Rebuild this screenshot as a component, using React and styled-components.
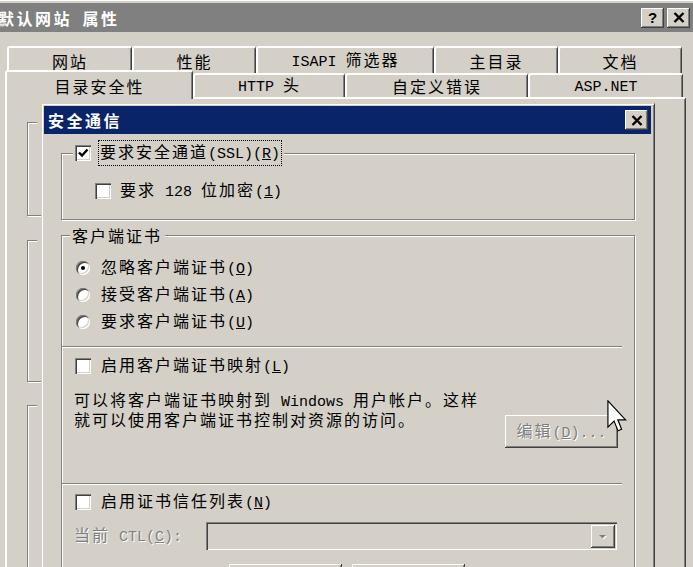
import React from "react";
import styled, { createGlobalStyle, css } from "styled-components";

const face = "#d4d0c8";

const GlobalStyle = createGlobalStyle`
  html, body { margin: 0; padding: 0; background: ${face}; overflow: hidden; }
  body {
    font-family: "Noto Sans CJK SC", "Noto Sans", sans-serif;
    font-size: 16px;
    letter-spacing: 2px;
    color: #000;
  }
  * { box-sizing: border-box; }
`;

const raised = css`
  box-shadow: inset -1px -1px 0 #404040, inset 1px 1px 0 #fff,
    inset -2px -2px 0 #808080, inset 2px 2px 0 ${face};
`;

const sunken = css`
  box-shadow: inset 1px 1px 0 #808080, inset 2px 2px 0 #404040,
    inset -1px -1px 0 #fff, inset -2px -2px 0 ${face};
`;

const Window = styled.div`
  position: relative;
  width: 693px;
  height: 567px;
  overflow: hidden;
  background: ${face};
  border-top: 1px solid #fff;
  padding-top: 2px;
`;

const TitleBar = styled.div`
  display: flex;
  align-items: center;
  gap: 3px;
  height: ${p => p.$h}px;
  padding: 0 3px 0 4px;
  background: ${p => (p.$active ? "#0a246a" : "#808080")};
`;

const TitleText = styled.div`
  flex: 1;
  margin-left: ${p => p.$indent || 0}px;
  color: #fff;
  font-weight: 700;
  letter-spacing: 2.5px;
  line-height: 20px;
  white-space: nowrap;
`;

const CapButton = styled.div`
  flex: none;
  width: 23px;
  height: 20px;
  display: grid;
  place-items: center;
  background: ${face};
  ${raised};
  font-family: "Liberation Sans", sans-serif;
  font-weight: 700;
  font-size: 15px;
  letter-spacing: 0;
  line-height: 1;
`;

const TabStrip = styled.div`
  margin-top: 14px;
  padding-left: 5px;
`;

const TabRow = styled.div`
  display: flex;
  align-items: flex-end;
  height: 27px;
  padding-left: ${p => p.$indent || 0}px;
  ${p =>
    p.$front &&
    css`
      margin-top: -3px;
      position: relative;
      z-index: 2;
    `}
`;

const Tab = styled.div`
  flex: none;
  width: ${p => p.$w}px;
  height: ${p => (p.$selected ? 29 : p.$front ? 24 : 27)}px;
  margin-bottom: ${p => (p.$selected ? -2 : 0)}px;
  display: flex;
  align-items: center;
  justify-content: center;
  background: ${face};
  border-top: 2px solid #fff;
  border-left: 2px solid #fff;
  border-right: 1px solid #404040;
  box-shadow: inset -1px 0 0 #808080;
  border-radius: 3px 3px 0 0;
  line-height: 20px;
  white-space: nowrap;
`;

const Panel = styled.div`
  width: 681px;
  height: 480px;
  background: ${face};
  border-top: 2px solid #fff;
  border-left: 2px solid #fff;
  border-right: 1px solid #404040;
  box-shadow: inset -1px 0 0 #808080;
  padding: 23px 0 0 20px;
`;

const Group = styled.div`
  border: 1px solid #808080;
  box-shadow: inset 1px 1px 0 #fff, 1px 1px 0 #fff;
  width: ${p => (p.$w ? `${p.$w}px` : "auto")};
  height: ${p => (p.$h ? `${p.$h}px` : "auto")};
  margin-top: ${p => p.$mt || 0}px;
  padding-bottom: ${p => p.$pb || 0}px;
`;

const Legend = styled.div`
  display: flex;
  align-items: center;
  gap: 8px;
  width: ${p => (p.$w ? `${p.$w}px` : "fit-content")};
  height: 20px;
  margin: -11px 0 0 ${p => p.$left}px;
  padding: 0 3px 0 2px;
  background: ${face};
  line-height: 20px;
  white-space: nowrap;
`;

const Dialog = styled.div`
  position: absolute;
  left: 41px;
  top: 102px;
  z-index: 5;
  width: 614px;
  background: ${face};
  border: 1px solid;
  border-color: ${face} #404040 #404040 ${face};
  box-shadow: inset 1px 1px 0 #fff, inset -1px -1px 0 #808080;
  padding: 2px 3px 2px 2px;
`;

const DialogBody = styled.div`
  padding: 19px 16px 0 17px;
`;

const Row = styled.div`
  display: flex;
  align-items: center;
  gap: ${p => p.$gap ?? 10}px;
  height: ${p => p.$h || 20}px;
  margin-top: ${p => p.$mt || 0}px;
  padding-left: ${p => p.$pl || 0}px;
  line-height: 20px;
  white-space: nowrap;
`;

const RadioList = styled.div`
  margin-top: 9px;
`;

const Text = styled.span`
  line-height: 20px;
  white-space: nowrap;
  ${p =>
    p.$disabled &&
    css`
      color: #808080;
      text-shadow: 1px 1px 0 #fff;
    `}
  ${p =>
    p.$focus &&
    css`
      outline: 1px dotted #000;
      outline-offset: 0;
      padding: 0 1px;
    `}
`;

const Lat = styled.span`
  font-family: "Liberation Mono", monospace;
  font-size: 15px;
  letter-spacing: 0;
`;

const Box = styled.span`
  flex: none;
  width: 16px;
  height: 16px;
  display: grid;
  place-items: center;
  background: #fff;
  ${sunken};
`;

const Radio = styled.span`
  flex: none;
  width: 14px;
  height: 14px;
  border-radius: 50%;
  display: grid;
  place-items: center;
  background: #fff;
  box-shadow: inset 1px 1px 0 #808080, inset 2px 2px 0 #404040,
    inset -1px -1px 0 #fff, inset -2px -2px 0 ${face};
  &::after {
    content: "";
    display: ${p => (p.$on ? "block" : "none")};
    width: 4px;
    height: 4px;
    border-radius: 50%;
    background: #000;
  }
`;

const Separator = styled.div`
  height: 2px;
  margin: ${p => p.$mt}px 12px 0 0;
  border-top: 1px solid #808080;
  border-bottom: 1px solid #fff;
`;

const Description = styled.div`
  display: flex;
  align-items: flex-start;
  margin-top: 15px;
  padding: 0 16px 0 12px;
`;

const Lines = styled.div`
  line-height: 16px;
  white-space: nowrap;
`;

const Button = styled.div`
  flex: none;
  width: 113px;
  height: 33px;
  margin-top: ${p => p.$mt || 0}px;
  margin-left: ${p => (p.$push ? "auto" : "0")};
  display: flex;
  align-items: center;
  justify-content: center;
  background: ${face};
  ${raised};
  line-height: 20px;
  white-space: nowrap;
`;

const Label = styled.div`
  flex: none;
  width: ${p => p.$w}px;
`;

const Combo = styled.div`
  flex: none;
  width: 411px;
  height: 28px;
  display: flex;
  justify-content: flex-end;
  padding: 3px 2px 2px;
  background: ${face};
  ${sunken};
`;

const DropButton = styled.div`
  width: 24px;
  height: 23px;
  display: grid;
  place-items: center;
  background: ${face};
  ${raised};
`;

const ButtonRow = styled.div`
  display: flex;
  gap: 10px;
  margin-top: 14px;
  padding-left: 167px;
`;

const Cursor = styled.svg`
  position: absolute;
  left: 607px;
  top: 399px;
  z-index: 10;
`;

const Key = ({ k }) => (
  <Lat>
    (<u>{k}</u>)
  </Lat>
);

const CloseGlyph = () => (
  <svg width="12" height="11" viewBox="0 0 12 11">
    <path d="M1.5 1 L10.5 10 M10.5 1 L1.5 10" stroke="#000" strokeWidth="2.4" />
  </svg>
);

const Check = ({ on }) => (
  <Box>
    {on && (
      <svg width="12" height="12" viewBox="0 0 12 12">
        <path d="M2 5.5 L5 8.5 L10.5 2.5" fill="none" stroke="#000" strokeWidth="2.4" />
      </svg>
    )}
  </Box>
);

const rowOne = [
  { w: 125, label: "网站" },
  { w: 124, label: "性能" },
  { w: 178, label: <><Lat>ISAPI{"\u00a0"}</Lat>筛选器</> },
  { w: 124, label: "主目录" },
  { w: 124, label: "文档" },
];

const rowTwo = [
  { w: 188, label: "目录安全性", selected: true },
  { w: 152, label: <><Lat>HTTP{"\u00a0"}</Lat>头</> },
  { w: 183, label: "自定义错误" },
  { w: 155, label: <Lat>ASP.NET</Lat> },
];

const radios = [
  { label: "忽略客户端证书", k: "O", on: true },
  { label: "接受客户端证书", k: "A" },
  { label: "要求客户端证书", k: "U" },
];

export default function App() {
  return (
    <Window>
      <GlobalStyle />
      <TitleBar $h={29}>
        <TitleText $indent={-6}>默认网站{"\u2002"}属性</TitleText>
        <CapButton>?</CapButton>
        <CapButton>
          <CloseGlyph />
        </CapButton>
      </TitleBar>

      <TabStrip>
        <TabRow $indent={2}>
          {rowOne.map((t, i) => (
            <Tab key={i} $w={t.w}>
              <Text>{t.label}</Text>
            </Tab>
          ))}
        </TabRow>
        <TabRow $front>
          {rowTwo.map((t, i) => (
            <Tab key={i} $w={t.w} $front $selected={t.selected}>
              <Text>{t.label}</Text>
            </Tab>
          ))}
        </TabRow>
        <Panel>
          <Group $w={600} $h={94}>
            <Legend $left={9} $w={60} />
          </Group>
          <Group $w={600} $h={142} $mt={24}>
            <Legend $left={9} $w={60} />
          </Group>
          <Group $w={600} $h={200} $mt={23}>
            <Legend $left={9} $w={60} />
          </Group>
        </Panel>
      </TabStrip>

      <Dialog>
        <TitleBar $h={28} $active>
          <TitleText>安全通信</TitleText>
          <CapButton>
            <CloseGlyph />
          </CapButton>
        </TitleBar>

        <DialogBody>
          <Group $pb={18}>
            <Legend $left={11}>
              <Check on />
              <Text $focus>
                要求安全通道<Lat>(SSL)</Lat>
                <Key k="R" />
              </Text>
            </Legend>
            <Row $mt={18} $pl={33} $gap={9}>
              <Check />
              <Text>
                要求<Lat> 128 </Lat>位加密<Key k="1" />
              </Text>
            </Row>
          </Group>

          <Group $mt={15} $pb={10}>
            <Legend $left={8}>客户端证书</Legend>
            <RadioList>
              {radios.map(r => (
                <Row key={r.k} $h={27} $pl={14} $gap={11}>
                  <Radio $on={r.on} />
                  <Text>
                    {r.label}
                    <Key k={r.k} />
                  </Text>
                </Row>
              ))}
            </RadioList>

            <Separator $mt={11} />
            <Row $mt={8} $pl={13} $gap={10}>
              <Check />
              <Text>
                启用客户端证书映射<Key k="L" />
              </Text>
            </Row>
            <Description>
              <Lines>
                可以将客户端证书映射到<Lat> Windows </Lat>用户帐户。这样
                <br />
                就可以使用客户端证书控制对资源的访问。
              </Lines>
              <Button $push $mt={24}>
                <Text $disabled>
                  编辑<Key k="D" />
                  <Lat>...</Lat>
                </Text>
              </Button>
            </Description>

            <Separator $mt={35} />
            <Row $mt={7} $pl={13} $gap={10}>
              <Check />
              <Text>
                启用证书信任列表<Key k="N" />
              </Text>
            </Row>
            <Row $mt={10} $h={28} $pl={12} $gap={0}>
              <Label $w={132}>
                <Text $disabled>
                  当前<Lat> CTL</Lat>
                  <Key k="C" />
                  <Lat>:</Lat>
                </Text>
              </Label>
              <Combo>
                <DropButton>
                  <svg width="10" height="6" viewBox="0 0 10 6">
                    <path d="M2 2 L9 2 L5.5 5.5 Z" fill="#fff" />
                    <path d="M1 1 L8 1 L4.5 4.5 Z" fill="#808080" />
                  </svg>
                </DropButton>
              </Combo>
            </Row>
            <ButtonRow>
              <Button>
                <Text $disabled>
                  新建<Key k="W" />
                  <Lat>...</Lat>
                </Text>
              </Button>
              <Button>
                <Text $disabled>
                  编辑<Key k="I" />
                  <Lat>...</Lat>
                </Text>
              </Button>
            </ButtonRow>
          </Group>
        </DialogBody>
      </Dialog>

      <Cursor width="20" height="33" viewBox="0 0 12 20">
        <path
          d="M0.5 0.5 L0.5 16.5 L4.2 12.8 L6.6 18.6 L8.8 17.7 L6.5 12 L11.2 12 Z"
          fill="#fff"
          stroke="#000"
          strokeWidth="0.7"
          strokeLinejoin="miter"
        />
      </Cursor>
    </Window>
  );
}
